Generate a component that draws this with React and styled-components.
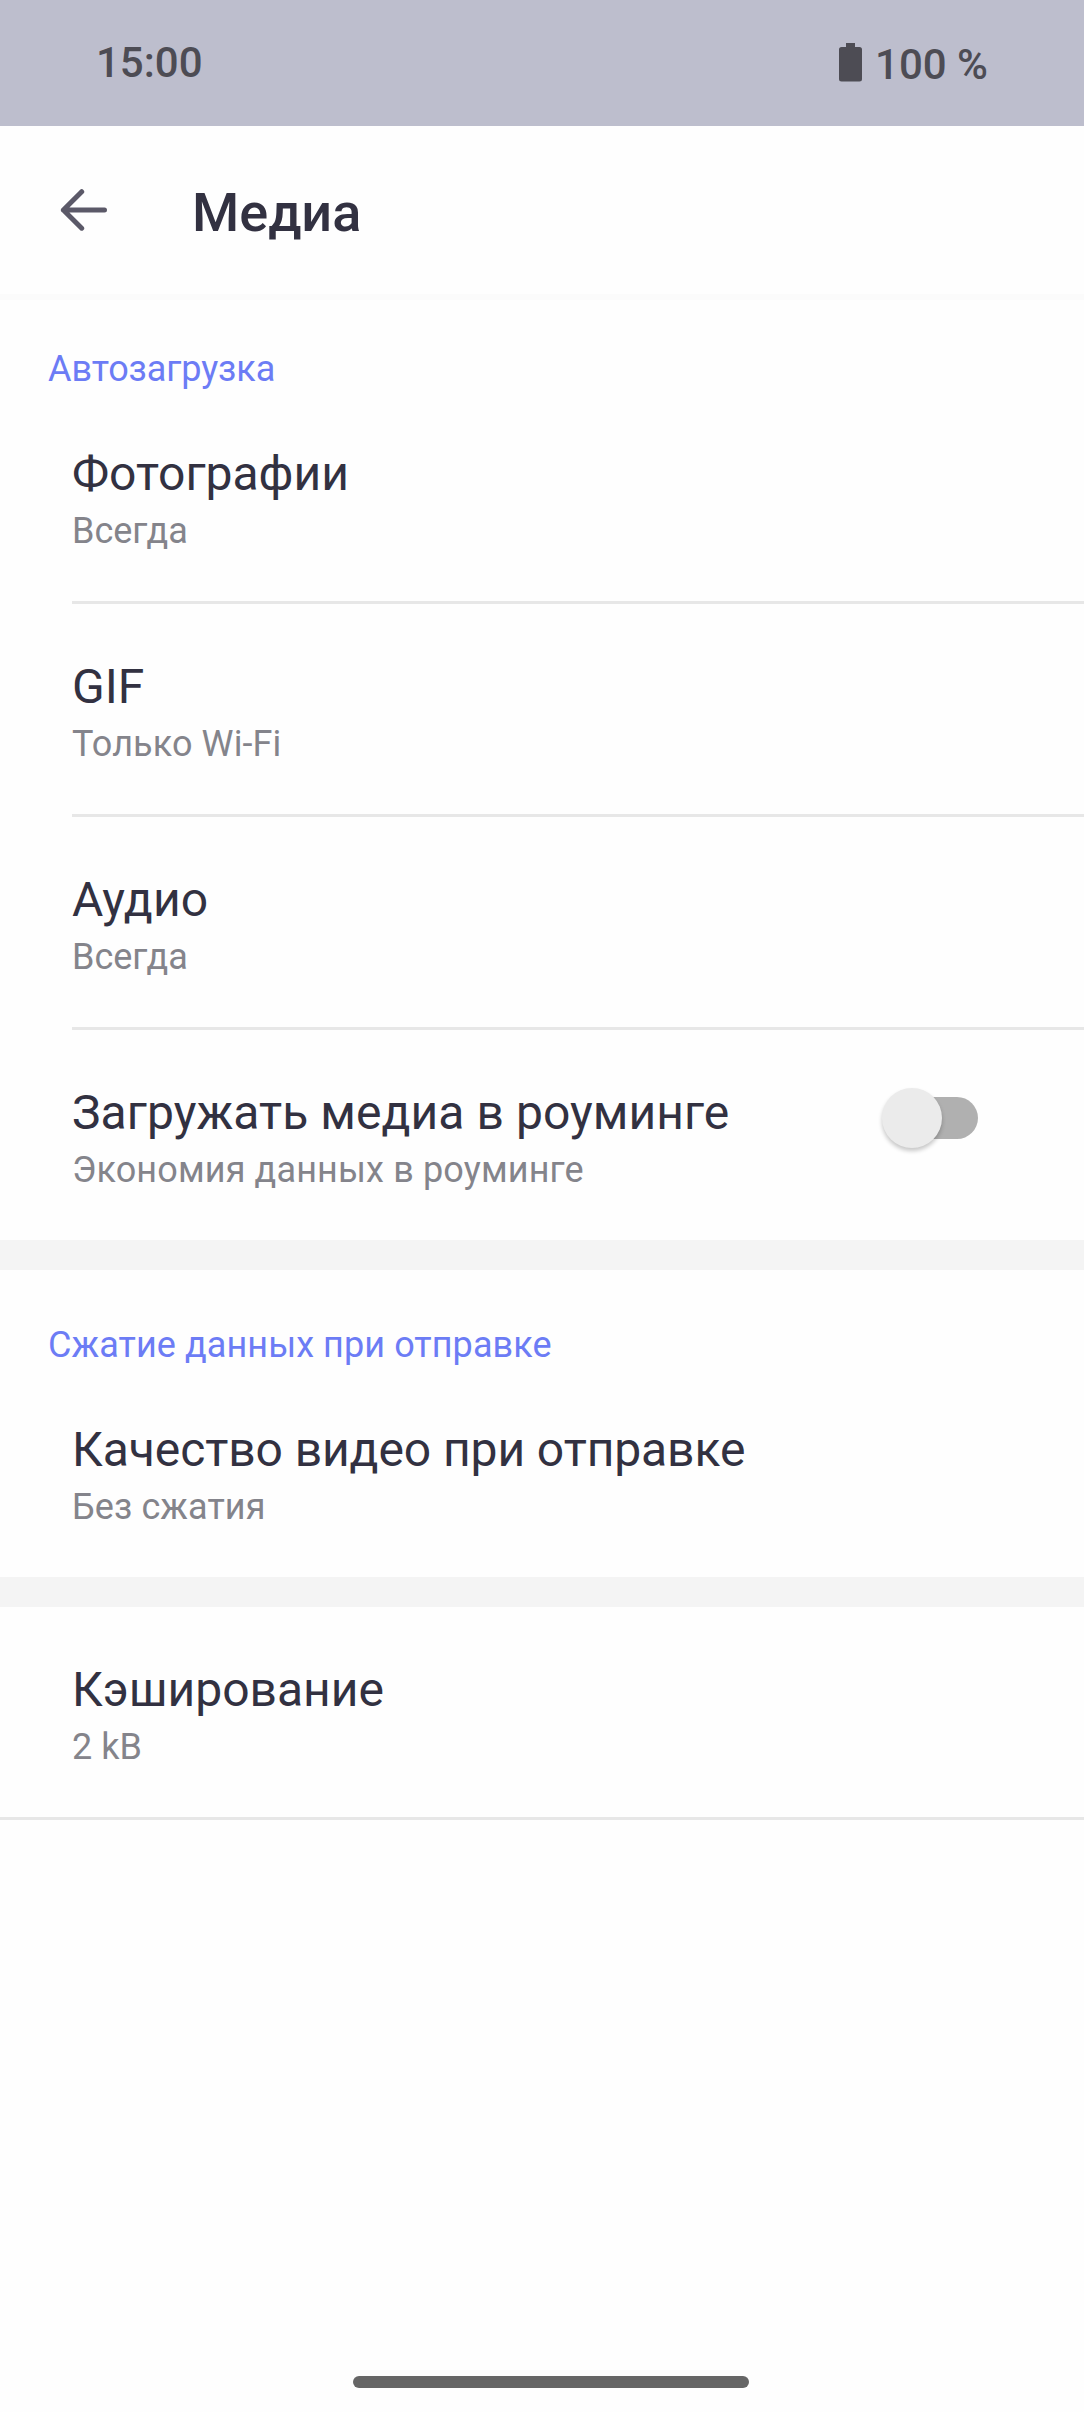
import React from "react";
import styled, { createGlobalStyle } from "styled-components";

const GlobalStyle = createGlobalStyle`
  * { box-sizing: border-box; }
  body {
    margin: 0;
    background: #fefefe;
    font-family: Roboto, "Noto Sans", sans-serif;
  }
`;

const Screen = styled.div`
  display: flex;
  flex-direction: column;
  width: 1084px;
  height: 2412px;
  background: #fefefe;
  overflow: hidden;
`;

const StatusBar = styled.div`
  display: flex;
  justify-content: space-between;
  height: 126px;
  padding: 38px 96px 0 96px;
  background: #bdbecd;
  color: #4d4c54;
  font-size: 42px;
  line-height: 49px;
  font-weight: 500;
`;

const Clock = styled.span``;

const Battery = styled.div`
  display: flex;
  gap: 13px;
  padding-top: 2px;
`;

const BatteryIcon = styled.svg`
  width: 23px;
  height: 39px;
  margin-top: 3px;
`;

const Header = styled.header`
  display: flex;
  height: 168px;
  padding-left: 60px;
  box-shadow: 0 6px 0 #fbfbfb;
`;

const BackButton = styled.button`
  display: flex;
  width: 132px;
  padding: 62px 0 0;
  border: 0;
  background: none;
`;

const Title = styled.h1`
  margin: 55px 0 0;
  font-size: 54px;
  line-height: 64px;
  font-weight: 500;
  color: #323141;
`;

const SectionLabel = styled.h2`
  height: 97px;
  margin: 0;
  padding: 54px 48px 0;
  font-size: 36px;
  line-height: 42px;
  font-weight: 400;
  letter-spacing: ${(p) => p.$tracking || 0}px;
  color: #6c7cf5;
`;

const Row = styled.div`
  display: flex;
  justify-content: space-between;
  height: 210px;
  padding: 55px 106px 0 72px;
`;

const RowText = styled.div`
  display: flex;
  flex-direction: column;
  gap: 8px;
`;

const RowTitle = styled.div`
  font-size: 48px;
  line-height: 56px;
  letter-spacing: ${(p) => p.$tracking || 0}px;
  color: #323141;
`;

const RowValue = styled.div`
  font-size: 36px;
  line-height: 42px;
  letter-spacing: ${(p) => p.$tracking || 0}px;
  color: #84848b;
`;

const Divider = styled.div`
  height: 3px;
  margin-left: ${(p) => (p.$full ? 0 : 72)}px;
  background: #e7e7e7;
`;

const Band = styled.div`
  height: 30px;
  background: #f4f4f4;
`;

const Switch = styled.div`
  display: flex;
  align-items: center;
  width: 90px;
  height: 42px;
  margin: 12px 0 0;
  border-radius: 21px;
  background: #b0b0b0;
`;

const Knob = styled.div`
  flex: none;
  width: 60px;
  height: 60px;
  margin-left: -6px;
  border-radius: 50%;
  background: #ebebeb;
  box-shadow: 0 3px 4px rgba(0, 0, 0, 0.22);
`;

const NavArea = styled.div`
  display: flex;
  margin-top: auto;
  padding: 0 0 24px 353px;
`;

const NavHandle = styled.div`
  width: 396px;
  height: 12px;
  border-radius: 6px;
  background: #666;
`;

function Setting({ title, value, titleTracking, valueTracking, children }) {
  return (
    <Row>
      <RowText>
        <RowTitle $tracking={titleTracking}>{title}</RowTitle>
        <RowValue $tracking={valueTracking}>{value}</RowValue>
      </RowText>
      {children}
    </Row>
  );
}

export default function App() {
  return (
    <Screen>
      <GlobalStyle />
      <StatusBar>
        <Clock>15:00</Clock>
        <Battery>
          <BatteryIcon viewBox="0 0 23 39" fill="#4d4c54">
            <path d="M7 0h9v4h4.500a2.500 2.500 0 0 1 2.500 2.500v29.500a2.500 2.500 0 0 1-2.500 2.500h-18a2.500 2.500 0 0 1-2.500-2.500v-29.500a2.500 2.500 0 0 1 2.500-2.500h4.500z" />
          </BatteryIcon>
          <span>100 %</span>
        </Battery>
      </StatusBar>
      <Header>
        <BackButton aria-label="Назад">
          <svg width="48" height="44" viewBox="0 0 48 44" fill="none" stroke="#5b5968" strokeWidth="5" strokeLinecap="round" strokeLinejoin="round">
            <path d="M44.500 22H3.400M21.700 3.700L3.400 22L21.700 40.200" />
          </svg>
        </BackButton>
        <Title>Медиа</Title>
      </Header>
      <SectionLabel $tracking={-0.1}>Автозагрузка</SectionLabel>
      <Setting title="Фотографии" value="Всегда" />
      <Divider />
      <Setting title="GIF" value="Только Wi-Fi" valueTracking={0.1} />
      <Divider />
      <Setting title="Аудио" value="Всегда" titleTracking={0.15} />
      <Divider />
      <Setting
        title="Загружать медиа в роуминге"
        value="Экономия данных в роуминге"
        titleTracking={0.06}
        valueTracking={0.14}
      >
        <Switch role="switch" aria-checked="false">
          <Knob />
        </Switch>
      </Setting>
      <Band />
      <SectionLabel $tracking={0.08}>Сжатие данных при отправке</SectionLabel>
      <Setting
        title="Качество видео при отправке"
        value="Без сжатия"
        titleTracking={-0.09}
        valueTracking={0.1}
      />
      <Band />
      <Setting title="Кэширование" value="2 kB" />
      <Divider $full />
      <NavArea>
        <NavHandle />
      </NavArea>
    </Screen>
  );
}
